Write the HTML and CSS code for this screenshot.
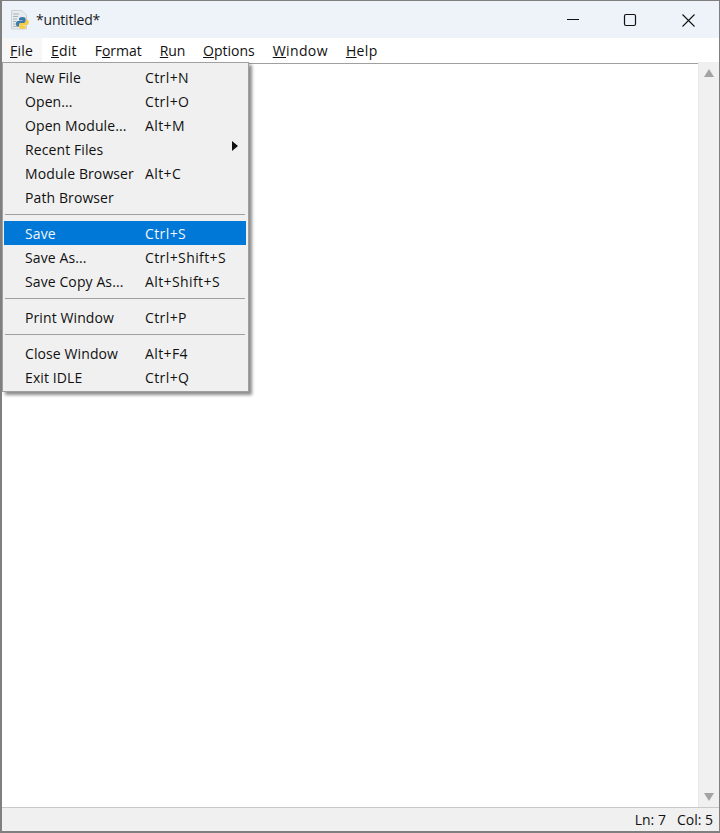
FILE: index.html
```html
<!DOCTYPE html>
<html lang="en">
<head>
<meta charset="utf-8">
<title>*untitled*</title>
<link rel="stylesheet" href="styles.css">
</head>
<body>
<div class="window">
  <header class="titlebar">
    <svg class="app-icon" width="20" height="20" viewBox="0 0 20 20">
      <path d="M.5 .5h10l5 4.500V19H.5z" fill="#e8ebee" stroke="#ccd1d6" stroke-width="1"/>
      <path d="M2 4h6M2 6.500h5M2 9h4M2 11.500h3M2 14h3M2 16.500h5" stroke="#aab2ba" stroke-width="1"/>
      <path d="M11.500 7c-2.500 0-3.500.8-3.500 2v1.500h3.500v.5H7c-1.300 0-2 1-2 2.700s.7 2.800 2 2.800h1v-1.600c0-1 .8-1.900 2-1.900h3c1 0 1.700-.8 1.700-1.700V9c0-1.200-1.200-2-3.200-2z" fill="#3b78ab"/>
      <path d="M11.500 7c-2.500 0-3.500.8-3.500 2v1.500h3.500v.5H7c-1.300 0-2 1-2 2.700s.7 2.800 2 2.800h1v-1.600c0-1 .8-1.900 2-1.900h3c1 0 1.700-.8 1.700-1.700V9c0-1.200-1.200-2-3.200-2z" fill="#f6cb45" transform="rotate(180 11.400 13)"/>
    </svg>
    <span class="title">*untitled*</span>
    <div class="controls">
      <svg class="ctl" width="60" height="38" viewBox="0 0 60 38"><path d="M26 18.500h12" stroke="#111" stroke-width="1"/></svg>
      <svg class="ctl" width="58" height="38" viewBox="0 0 58 38"><rect x="23.500" y="13.500" width="11" height="11" rx="1.500" fill="none" stroke="#111" stroke-width="1.200"/></svg>
      <svg class="ctl" width="60" height="38" viewBox="0 0 60 38"><path d="M23.500 13.500l12 12M35.500 13.500l-12 12" stroke="#111" stroke-width="1.100"/></svg>
    </div>
  </header>
  <nav class="menubar">
    <span class="top top-open"><u>F</u>ile</span>
    <span class="top top-edit"><u>E</u>dit</span>
    <span class="top">F<u>o</u>rmat</span>
    <span class="top top-run"><u>R</u>un</span>
    <span class="top"><u>O</u>ptions</span>
    <span class="top top-wide"><u>W</u>indow</span>
    <span class="top top-wide"><u>H</u>elp</span>
  </nav>
  <main class="body">
    <div class="editor"></div>
    <div class="scrollbar">
      <svg width="10" height="8" viewBox="0 0 10 8"><path d="M5 0l5 8H0z" fill="#a3a3a3"/></svg>
      <svg width="10" height="8" viewBox="0 0 10 8"><path d="M0 0h10L5 8z" fill="#a3a3a3"/></svg>
    </div>
  </main>
  <footer class="status">
    <span>Ln: 7</span>
    <span>Col: 5</span>
  </footer>
  <div class="menu">
    <div class="item"><span class="label">New File</span><span class="key">Ctrl+N</span></div>
    <div class="item"><span class="label">Open...</span><span class="key">Ctrl+O</span></div>
    <div class="item"><span class="label">Open Module...</span><span class="key">Alt+M</span></div>
    <div class="item"><span class="label">Recent Files</span><i class="arrow"></i></div>
    <div class="item"><span class="label">Module Browser</span><span class="key">Alt+C</span></div>
    <div class="item"><span class="label">Path Browser</span></div>
    <div class="sep"></div>
    <div class="item active"><span class="label">Save</span><span class="key">Ctrl+S</span></div>
    <div class="item"><span class="label">Save As...</span><span class="key">Ctrl+Shift+S</span></div>
    <div class="item"><span class="label">Save Copy As...</span><span class="key">Alt+Shift+S</span></div>
    <div class="sep"></div>
    <div class="item"><span class="label">Print Window</span><span class="key">Ctrl+P</span></div>
    <div class="sep"></div>
    <div class="item"><span class="label">Close Window</span><span class="key">Alt+F4</span></div>
    <div class="item"><span class="label">Exit IDLE</span><span class="key">Ctrl+Q</span></div>
  </div>
</div>
</body>
</html>
```
FILE: styles.css
```css
* { box-sizing: border-box; }
html, body { margin: 0; height: 100%; overflow: hidden; }
body { font-family: "Open Sans", "Noto Sans", sans-serif; font-size: 14px; color: #111; background: #fff; }
.window {
  position: relative;
  width: 720px;
  height: 833px;
  display: flex;
  flex-direction: column;
  border-top: 1px solid #7f7f7f;
  border-left: 2px solid #7f7f7f;
  border-right: 1px solid #7f7f7f;
  border-bottom: 2px solid #7f7f7f;
}
.titlebar {
  height: 37px;
  flex: none;
  display: flex;
  align-items: center;
  background: #eef3fa;
  padding-left: 9px;
}
.app-icon { flex: none; }
.title { margin-left: 5px; font-size: 14px; letter-spacing: -.2px; color: #1a1a1a; }
.controls { margin-left: auto; display: flex; }
.ctl { display: block; }
.menubar {
  height: 24px;
  flex: none;
  display: flex;
  background: #fff;
}
.top { padding: 0 9px; line-height: 25px; }
.top-open { background: #f7f7f7; width: 40px; padding-left: 8px; letter-spacing: .2px; }
.top-edit { letter-spacing: .2px; }
.top-run { letter-spacing: -.2px; }
.top-wide { letter-spacing: .38px; }
.body { flex: 1; display: flex; min-height: 0; }
.editor { flex: 1; margin-top: 1px; background: #fff; border-top: 1px solid #a0a0a0; }
.scrollbar {
  width: 21px;
  flex: none;
  background: #f0f0f0;
  display: flex;
  flex-direction: column;
  align-items: center;
  justify-content: space-between;
  padding: 7px 0 6px;
  border-left: 1px solid #e8e8e8;
}
.scrollbar svg { display: block; }
.status {
  height: 24px;
  flex: none;
  display: flex;
  justify-content: flex-end;
  align-items: center;
  gap: 11px;
  padding-right: 6px;
  background: #f0f0f0;
  border-top: 1px solid #c8c8c8;
}
.menu {
  position: absolute;
  left: 0;
  top: 61px;
  width: 247px;
  padding: 2px 2px 2px 1px;
  background: #f0f0f0;
  border: 1px solid #a0a0a0;
  box-shadow: 3px 3px 3px rgba(0,0,0,.45);
}
.item {
  height: 24px;
  display: flex;
  align-items: center;
  padding-left: 21px;
  position: relative;
}
.label { width: 120px; flex: none; letter-spacing: .1px; }
.key { letter-spacing: .4px; }
.active { background: #0078d7; color: #f0f6fc; }
.sep { height: 12px; padding-top: 5px; margin: 0 1px; }
.sep::before { content: ""; display: block; height: 1px; background: #a0a0a0; }
.arrow {
  position: absolute;
  right: 8px;
  top: 4px;
  width: 0;
  height: 0;
  border-left: 6px solid #111;
  border-top: 5px solid transparent;
  border-bottom: 5px solid transparent;
}
```
